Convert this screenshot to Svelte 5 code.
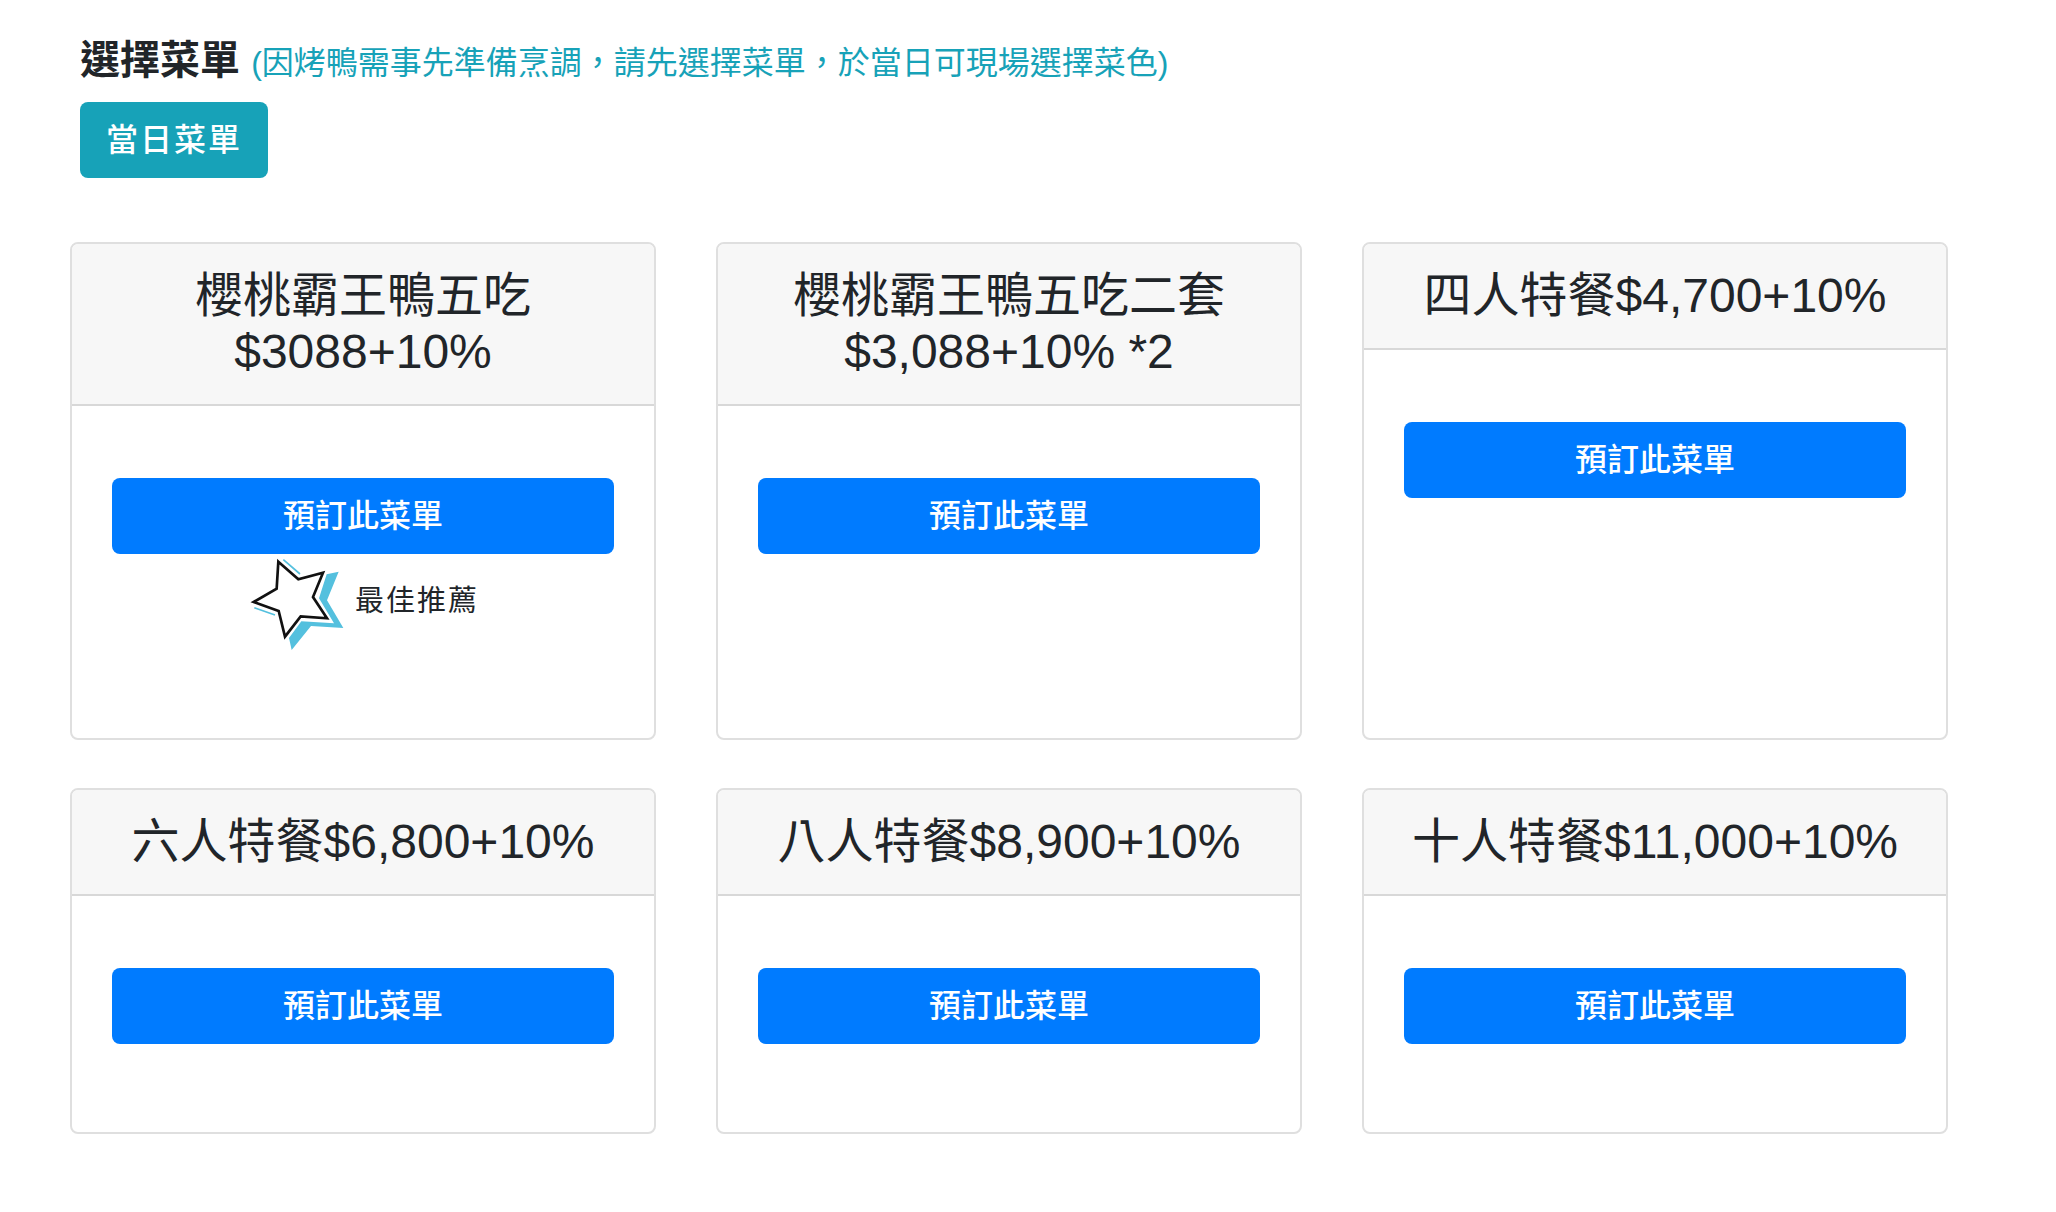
<script>
  const menus = [
    { name: '櫻桃霸王鴨五吃', price: '$3088+10%', twoLines: true, recommended: true },
    { name: '櫻桃霸王鴨五吃二套', price: '$3,088+10% *2', twoLines: true },
    { name: '四人特餐', price: '$4,700+10%' },
    { name: '六人特餐', price: '$6,800+10%' },
    { name: '八人特餐', price: '$8,900+10%' },
    { name: '十人特餐', price: '$11,000+10%' }
  ];
</script>

<main lang="zh-Hant">
  <header class="intro">
    <h1>選擇菜單 <small>(因烤鴨需事先準備烹調，請先選擇菜單，於當日可現場選擇菜色)</small></h1>
    <button type="button" class="btn today">當日菜單</button>
  </header>

  <section class="menus">
    {#each menus as menu}
      <article class="card">
        <h2>{menu.name}{#if menu.twoLines}<br />{/if}{menu.price}</h2>
        <div class="body">
          <button type="button" class="btn order">預訂此菜單</button>
          {#if menu.recommended}
            <div class="recommend">
              <svg viewBox="20 27 288 288" aria-hidden="true">
                <path class="shade" d="M259 88 295 80 260 166 309 249 212 243 154 315 146 279 183 229 281 235 236 160Z" />
                <path class="accent" d="M129 44 179 87M42 188 104 210" />
                <path class="star" d="M114 50 174 103 248 83 218 156 260 220 181 214 134 275 115 198 40 171 109 131Z" />
              </svg>
              <span>最佳推薦</span>
            </div>
          {/if}
        </div>
      </article>
    {/each}
  </section>
</main>

<style>
  :global(body) {
    margin: 0;
    background: #fff;
  }

  main {
    padding: 36px 108px 72px 70px;
    color: #212529;
    font-family: 'Liberation Sans', 'Noto Sans CJK TC', sans-serif;
  }

  .intro {
    padding-left: 10px;
    margin-bottom: 64px;
  }

  h1 {
    margin: 0 0 18px;
    font-size: 40px;
    font-weight: 700;
    line-height: 48px;
  }

  small {
    color: #17a2b8;
    font-size: 32px;
    font-weight: 400;
    line-height: 32px;
  }

  .btn {
    display: block;
    box-sizing: border-box;
    padding: 14px 26px;
    border: 0;
    border-radius: 8px;
    color: #fff;
    font-family: inherit;
    font-size: 32px;
    font-weight: 500;
    line-height: 48px;
    cursor: pointer;
  }

  .today {
    background: #17a2b8;
    letter-spacing: 2px;
  }

  .order {
    width: 100%;
    background: #007bff;
  }

  .menus {
    display: grid;
    grid-template-columns: repeat(3, 1fr);
    gap: 48px 60px;
  }

  .card {
    border: 2px solid #dfdfdf;
    border-radius: 8px;
    overflow: hidden;
  }

  h2 {
    margin: 0;
    padding: 24px 40px;
    border-bottom: 2px solid #d8d8d8;
    background: #f7f7f7;
    font-size: 48px;
    font-weight: 400;
    line-height: 56px;
    text-align: center;
  }

  .body {
    padding: 72px 40px 88px;
  }

  .recommend {
    display: flex;
    align-items: flex-start;
    justify-content: center;
    gap: 12px;
    font-size: 29px;
    line-height: 94px;
    letter-spacing: 2px;
  }

  svg {
    width: 96px;
    height: 96px;
    overflow: visible;
  }

  .shade {
    fill: #54c0de;
  }

  .accent {
    fill: none;
    stroke: #54c0de;
    stroke-width: 5;
  }

  .star {
    fill: #fff;
    stroke: #111;
    stroke-width: 8;
  }
</style>
